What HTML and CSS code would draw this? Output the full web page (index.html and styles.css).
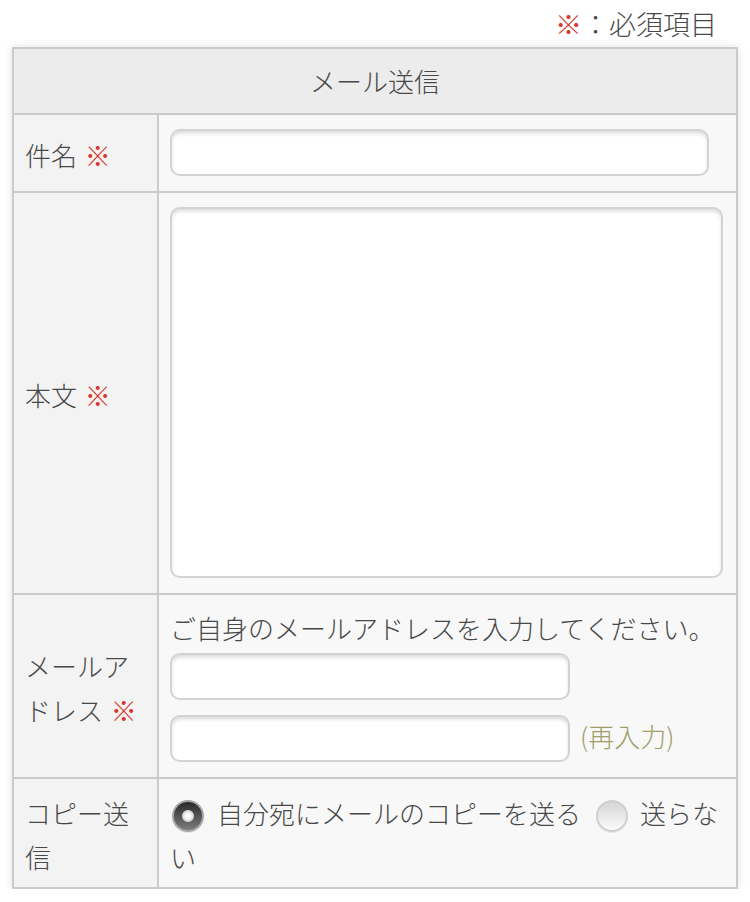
FILE: index.html
```html
<!DOCTYPE html>
<html lang="ja">
<head>
<meta charset="utf-8">
<title>メール送信</title>
<link rel="stylesheet" href="styles.css">
</head>
<body>
<p class="note"><span class="req">※</span>：必須項目</p>
<form class="mailform">
  <div class="head">メール送信</div>

  <div class="lbl"><span class="lt">件名 <span class="req">※</span></span></div>
  <div class="val"><input class="txt subject" type="text"></div>

  <div class="lbl"><span class="lt">本文 <span class="req">※</span></span></div>
  <div class="val"><textarea class="txt body"></textarea></div>

  <div class="lbl"><span class="lt">メールアドレス <span class="req">※</span></span></div>
  <div class="val addr">
    <div class="hint">ご自身のメールアドレスを入力してください。</div>
    <div class="line first"><input class="txt mail" type="email"></div>
    <div class="line"><input class="txt mail" type="email"><span class="again">(再入力)</span></div>
  </div>

  <div class="lbl"><span class="lt">コピー送信</span></div>
  <div class="val copy"><label class="opt"><input class="radio" type="radio" name="cp" checked><span>自分宛にメールのコピーを送る</span></label><label class="opt opt2"><input class="radio" type="radio" name="cp"><span>送らない</span></label></div>
</form>
</body>
</html>
```

FILE: styles.css
```css
* { box-sizing: border-box; }

body {
  margin: 0;
  background: #fff;
  color: #484848;
  font-family: "Noto Sans CJK JP", "Noto Sans", sans-serif;
  font-weight: 300;
  font-size: 26px;
}

.note {
  margin: 0;
  height: 47px;
  line-height: 47px;
  text-align: right;
  padding-right: 33px;
  font-size: 27px;
}

.req { color: #d8362c; }

.lt .req { margin-left: 2px; }

.mailform {
  margin: 0 12px;
  display: grid;
  grid-template-columns: 143px 1fr;
  border: 2px solid #cbcbcb;
  box-shadow: 0 0 8px rgba(0, 0, 0, 0.12);
}

.head {
  grid-column: 1 / 3;
  height: 64px;
  line-height: 64px;
  text-align: center;
  background: #ececec;
}

.lbl {
  border-top: 2px solid #cbcbcb;
  background: #f3f3f3;
  display: flex;
  align-items: center;
  padding: 4px 8px 0 11px;
  line-height: 44px;
}

.lt { display: block; }

.val {
  border-top: 2px solid #cbcbcb;
  border-left: 2px solid #cbcbcb;
  background: #f8f8f8;
  padding: 14px 13px 15px 11px;
}

.txt {
  display: block;
  margin: 0;
  padding: 4px 10px;
  background: #fff;
  border: 2px solid #d3d3d3;
  border-radius: 10px;
  box-shadow: inset 0 3px 4px -1px rgba(0, 0, 0, 0.16);
  font: inherit;
  color: #444;
  outline: none;
}

.subject { width: 539px; height: 47px; }

.body { width: 100%; height: 371px; resize: none; }

.addr { padding-top: 11px; }
.hint { line-height: 44px; white-space: nowrap; }
.line { display: flex; align-items: center; margin-top: 15px; }
.line.first { margin-top: 3px; }
.mail { width: 400px; height: 47px; }
.again { margin-left: 10px; color: #a09d68; line-height: 30px; position: relative; top: -3px; }

.copy { padding: 12px 13px 8px 11px; line-height: 44px; }
.opt { cursor: pointer; }
.opt2 { margin-left: 13px; }

.radio {
  appearance: none;
  -webkit-appearance: none;
  display: inline-block;
  width: 32px;
  height: 32px;
  margin: 0 13px 0 2px;
  border-radius: 50%;
  vertical-align: -8px;
  border: 2px solid #cfcfcf;
  background: linear-gradient(#d5d5d5, #fbfbfb);
  box-shadow: 0 1px 1px rgba(0, 0, 0, 0.08);
}

.radio:checked {
  border-color: #a5a5a5;
  background:
    radial-gradient(circle, #ffffff 0, #f6f6f6 3px, #cfcfcf 5.5px, rgba(0, 0, 0, 0) 6.5px),
    linear-gradient(#2a2a2a, #7c7c7c);
}

.opt2 .radio { margin-right: 12px; }
```
